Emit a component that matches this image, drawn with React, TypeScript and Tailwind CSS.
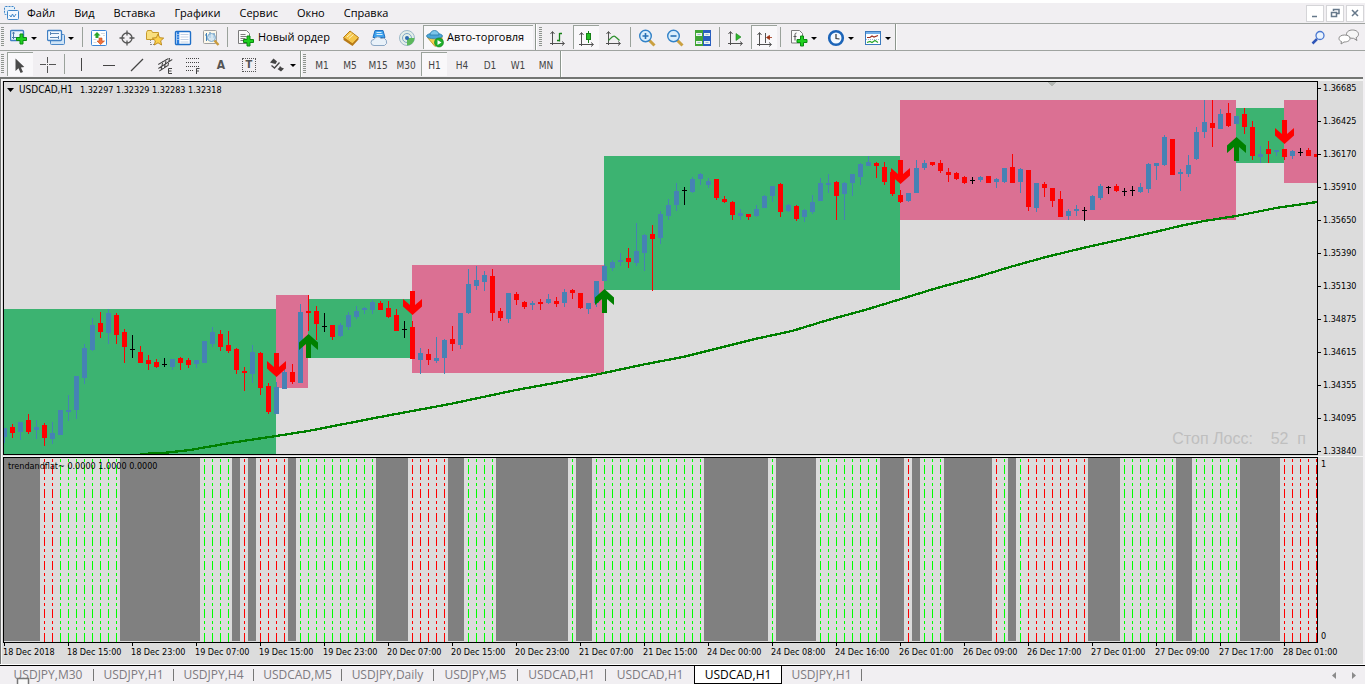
import React from "react";

type Kind = "b" | "r" | "k";
type Candle = [Kind, number, number, number, number];

const BLUE = "#4682b4";
const RED = "#ff0000";
const GREEN_ZONE = "#3cb371";
const PINK_ZONE = "#db7093";

// kind, high, low, body top, body bottom (chart rows)
const candles: Candle[] = [
  ["b", 428, 443, 428, 437], ["r", 424, 438, 427, 433], ["b", 422, 440, 422, 432], ["r", 414, 434, 420, 432],
  ["b", 420, 439, 427, 430], ["r", 423, 446, 425, 438], ["b", 422, 444, 433, 439], ["b", 410, 435, 410, 435],
  ["b", 395, 421, 410, 412], ["b", 376, 419, 376, 410], ["b", 344, 384, 348, 378], ["b", 318, 351, 325, 350],
  ["r", 312, 338, 323, 332], ["b", 309, 344, 313, 333], ["r", 313, 344, 315, 335], ["r", 329, 363, 332, 347],
  ["k", 335, 358, 349, 350], ["r", 346, 363, 352, 363], ["r", 355, 370, 360, 364], ["r", 359, 368, 362, 367],
  ["k", 358, 367, 364, 365], ["b", 359, 370, 359, 367], ["r", 357, 370, 358, 363], ["r", 358, 368, 360, 365],
  ["b", 360, 368, 360, 364], ["b", 341, 363, 341, 363], ["b", 327, 347, 332, 344], ["r", 330, 351, 334, 347],
  ["r", 331, 353, 345, 351], ["r", 348, 374, 349, 370], ["r", 367, 391, 371, 373], ["b", 345, 383, 352, 374],
  ["r", 352, 395, 353, 388], ["r", 383, 414, 386, 412], ["b", 382, 414, 387, 414], ["b", 368, 389, 372, 389],
  ["r", 364, 384, 372, 382], ["b", 304, 383, 312, 383], ["r", 295, 331, 311, 313], ["r", 306, 340, 311, 324],
  ["k", 313, 332, 326, 327], ["r", 325, 340, 325, 337], ["b", 323, 337, 325, 336], ["b", 312, 330, 315, 327],
  ["b", 306, 319, 311, 317], ["b", 307, 314, 308, 310], ["b", 300, 314, 302, 310], ["r", 301, 310, 303, 310],
  ["r", 301, 318, 308, 317], ["r", 309, 331, 315, 331], ["k", 321, 338, 329, 330], ["r", 321, 359, 327, 359],
  ["b", 348, 374, 353, 360], ["r", 349, 365, 354, 360], ["b", 337, 363, 358, 361], ["b", 339, 374, 340, 358],
  ["r", 326, 351, 339, 344], ["b", 313, 349, 313, 345], ["b", 269, 314, 284, 313], ["b", 266, 290, 280, 286],
  ["b", 271, 291, 275, 282], ["r", 269, 321, 276, 313], ["r", 308, 321, 311, 318], ["b", 293, 323, 293, 319],
  ["r", 292, 305, 294, 300], ["r", 301, 309, 302, 307], ["b", 301, 310, 303, 305], ["r", 299, 310, 302, 304],
  ["b", 294, 304, 299, 303], ["r", 297, 307, 301, 304], ["b", 289, 307, 292, 303], ["r", 289, 299, 290, 293],
  ["r", 293, 309, 293, 308], ["b", 303, 314, 303, 309], ["b", 281, 307, 281, 303], ["b", 264, 281, 266, 281],
  ["b", 260, 271, 262, 268], ["b", 253, 266, 260, 262], ["r", 248, 268, 258, 262], ["b", 223, 266, 251, 263],
  ["b", 234, 271, 235, 253], ["r", 225, 291, 234, 239], ["b", 211, 244, 214, 238], ["b", 199, 220, 205, 216],
  ["b", 183, 211, 191, 205], ["k", 187, 205, 190, 191], ["b", 177, 193, 179, 192], ["b", 173, 185, 174, 179],
  ["b", 178, 188, 181, 185], ["r", 179, 200, 179, 198], ["r", 196, 203, 199, 202], ["r", 201, 220, 202, 215],
  ["b", 209, 220, 213, 216], ["r", 214, 220, 214, 217], ["b", 205, 217, 209, 216], ["b", 195, 208, 196, 208],
  ["b", 186, 202, 186, 196], ["r", 183, 217, 184, 212], ["b", 204, 212, 205, 211], ["r", 205, 221, 206, 219],
  ["b", 209, 222, 210, 217], ["b", 195, 214, 202, 212], ["b", 178, 201, 183, 201], ["b", 174, 193, 183, 185],
  ["r", 181, 220, 182, 196], ["b", 182, 220, 183, 194], ["b", 174, 196, 174, 183], ["b", 163, 185, 164, 177],
  ["b", 156, 166, 162, 166], ["r", 162, 178, 163, 166], ["r", 162, 185, 167, 182], ["r", 172, 196, 172, 194],
  ["r", 190, 203, 195, 202], ["b", 193, 202, 193, 201], ["b", 160, 193, 168, 193], ["b", 160, 170, 163, 168],
  ["r", 162, 166, 162, 165], ["r", 160, 173, 163, 171], ["r", 168, 182, 172, 175], ["r", 172, 180, 173, 179],
  ["r", 176, 184, 177, 183], ["k", 177, 184, 180, 181], ["b", 176, 182, 177, 180], ["r", 176, 183, 176, 183],
  ["b", 178, 188, 179, 182], ["b", 168, 183, 168, 182], ["r", 154, 183, 167, 183], ["b", 168, 193, 169, 182],
  ["r", 170, 211, 170, 207], ["b", 183, 212, 183, 208], ["r", 182, 197, 184, 188], ["r", 188, 207, 188, 201],
  ["r", 191, 217, 199, 217], ["b", 209, 220, 211, 216], ["b", 205, 216, 209, 211], ["k", 207, 221, 210, 211],
  ["b", 195, 210, 196, 210], ["b", 184, 200, 186, 198], ["k", 186, 194, 187, 188], ["r", 184, 192, 186, 191],
  ["k", 188, 196, 191, 192], ["k", 186, 196, 190, 191], ["b", 183, 193, 187, 192], ["b", 163, 193, 164, 189],
  ["b", 163, 180, 163, 166], ["b", 135, 166, 137, 165], ["r", 139, 175, 139, 175], ["b", 169, 191, 172, 174],
  ["b", 155, 177, 165, 174], ["b", 127, 160, 132, 159], ["b", 100, 138, 122, 132], ["r", 100, 147, 123, 128],
  ["b", 109, 129, 114, 129], ["r", 103, 127, 113, 126], ["b", 116, 124, 116, 124], ["r", 108, 134, 114, 127],
  ["r", 121, 160, 127, 156], ["b", 146, 163, 154, 157], ["r", 141, 163, 149, 154], ["b", 150, 156, 150, 152],
  ["r", 149, 160, 149, 157], ["b", 150, 159, 151, 156], ["k", 148, 156, 152, 153], ["r", 148, 156, 150, 156],
  ["r", 154, 157, 154, 157],
];

const zones = [
  { x: 4, y: 309, w: 272, h: 146, c: GREEN_ZONE },
  { x: 276, y: 295, w: 32, h: 93, c: PINK_ZONE },
  { x: 308, y: 299, w: 104, h: 59, c: GREEN_ZONE },
  { x: 412, y: 265, w: 192, h: 108, c: PINK_ZONE },
  { x: 604, y: 156, w: 296, h: 134, c: GREEN_ZONE },
  { x: 900, y: 100, w: 336, h: 120, c: PINK_ZONE },
  { x: 1236, y: 108, w: 48, h: 55, c: GREEN_ZONE },
  { x: 1284, y: 100, w: 33, h: 83, c: PINK_ZONE },
];

const ma =
  "140,454 163,453 190,450 230,443 276,436 308,431 380,417 450,404 516,390 560,382 604,373 646,364 683,357 719,348 755,339 792,331 828,320 865,310 901,299 937,288 974,278 1010,267 1046,257 1083,248 1119,240 1155,232 1180,226 1204,221 1236,216 1276,208 1317,202";

const signals: [number, number, boolean][] = [
  [276, 377, false], [308, 334, true], [412, 315, false], [604, 289, true], [900, 184, false], [1236, 137, true], [1284, 144, false],
];

const flats = [
  [4, 40], [120, 200], [232, 240], [248, 256], [288, 296], [376, 408], [448, 464], [496, 568], [576, 592], [704, 768], [776, 816],
  [880, 904], [912, 920], [944, 992], [1008, 1016], [1088, 1120], [1176, 1192], [1240, 1280],
];

// first bar, last bar, is red
const trends: [number, number, boolean][] = [
  [44, 52, true], [60, 116, false], [204, 228, false], [244, 244, true], [260, 284, true], [300, 372, false], [412, 444, true],
  [468, 492, false], [572, 572, false], [596, 700, false], [772, 772, false], [820, 876, false], [908, 908, true], [924, 940, false],
  [996, 996, true], [1004, 1004, false], [1020, 1020, false], [1028, 1084, true], [1124, 1172, false], [1196, 1236, false], [1284, 1316, true],
];

const prices = ["1.36685", "1.36425", "1.36170", "1.35910", "1.35650", "1.35390", "1.35130", "1.34875", "1.34615", "1.34355", "1.34095", "1.33840"];

const times = [
  "18 Dec 2018", "18 Dec 15:00", "18 Dec 23:00", "19 Dec 07:00", "19 Dec 15:00", "19 Dec 23:00", "20 Dec 07:00", "20 Dec 15:00",
  "20 Dec 23:00", "21 Dec 07:00", "21 Dec 15:00", "24 Dec 00:00", "24 Dec 08:00", "24 Dec 16:00", "26 Dec 01:00", "26 Dec 09:00",
  "26 Dec 17:00", "27 Dec 01:00", "27 Dec 09:00", "27 Dec 17:00", "28 Dec 01:00",
];

const tabs = [
  { t: "USDJPY,M30", w: "w-[91px]" }, { t: "USDJPY,H1", w: "w-20" }, { t: "USDJPY,H4", w: "w-20" }, { t: "USDCAD,M5", w: "w-[88px]" },
  { t: "USDJPY,Daily", w: "w-[92px]" }, { t: "USDJPY,M5", w: "w-[84px]" }, { t: "USDCAD,H1", w: "w-[88px]" }, { t: "USDCAD,H1", w: "w-[88px]" },
  { t: "USDCAD,H1", w: "w-[88px]", active: true }, { t: "USDJPY,H1", w: "w-20" },
];

const SMALL = "font-['DejaVu_Sans_Condensed','DejaVu_Sans',sans-serif]";

function Ico({ children }: { children: React.ReactNode }) {
  return (
    <svg width="18" height="18" viewBox="0 0 18 18" className="mt-[2px] shrink-0" aria-hidden="true">
      {children}
    </svg>
  );
}

const plus = (x: number, y: number) => (
  <path
    transform={`translate(${x} ${y})`}
    d="M4 .5h3v3.500h3.500v3H7v3.500H4V7H.5V4H4z"
    fill="#1fd01f"
    stroke="#0b8a12"
    strokeWidth="1"
  />
);

const axes = (
  <path d="M3.500 3v13M1 14.500h14M1.500 5l2-2.500 2 2.500M13 12.500l2.500 2-2.500 2" fill="none" stroke="#505050" />
);

const icons = {
  newChart: (
    <Ico>
      <rect x=".5" y="1.500" width="13" height="10" rx="1" fill="#e8f2fc" stroke="#3f7fc4" strokeWidth="1.400" />
      <path d="M3.500 3v7M2 8.500h9M2.500 4.500l1-1.500 1 1.500" stroke="#4a78a8" fill="none" />
      {plus(6, 4.5)}
    </Ico>
  ),
  profiles: (
    <Ico>
      <rect x="3.500" y="5.500" width="14" height="10" rx="1" fill="#cfe3f6" stroke="#4a86c6" />
      <rect x=".5" y="1.500" width="14" height="10" rx="1" fill="#f2f8fe" stroke="#3f7fc4" strokeWidth="1.300" />
      <path d="M3 4.500h9M3 8.500h9M3.500 3v3M11.500 7v3" stroke="#5b87b5" />
    </Ico>
  ),
  market: (
    <Ico>
      <rect x="1.500" y="1.500" width="15" height="15" rx="1" fill="#fff" stroke="#3c86d8" />
      <path d="M11 4.500h4M13 6.500h2M3.500 10.500h3M3.500 13.500h3" stroke="#d5d9de" />
      <path d="M7 3l3.500 3.500H8.500v2.500h-3V6.500h-2z" fill="#2ba52b" />
      <path d="M10.500 15.500L7 12h2V9h3v3h2.500z" fill="#f0703a" stroke="#c84a18" strokeWidth=".6" />
    </Ico>
  ),
  crosshair: (
    <Ico>
      <circle cx="9" cy="9" r="5" fill="none" stroke="#555" strokeWidth="1.300" />
      <path d="M9 1.500v5M9 11.500v5M1.500 9h5M11.500 9h5" stroke="#555" strokeWidth="1.300" />
    </Ico>
  ),
  navigator: (
    <Ico>
      <path d="M.5 3.500l1-2h4l1 2h6v7H.5z" fill="#f9df7e" stroke="#c79a2c" />
      <path d="M4.500 11v5M5 15.500h3" stroke="#8a8a8a" strokeDasharray="1 1" />
      <path d="M12 5l1.700 3.700 4 .4-3 2.700.9 4.200-3.600-2.200L8.400 16l.9-4.200-3-2.700 4-.4z" fill="#fbd04b" stroke="#b98518" strokeWidth=".9" />
    </Ico>
  ),
  dataWin: (
    <Ico>
      <rect x="1.500" y="2.500" width="15" height="13" rx="1" fill="#fff" stroke="#1f6fc8" strokeWidth="1.400" />
      <path d="M4 3v12" stroke="#2a7de0" strokeWidth="2.500" />
      <path d="M6.500 5.500h8M6.500 8h8M6.500 10.500h8M6.500 13h8" stroke="#c3d2e6" />
      <path d="M3.500 5.500h1M3.500 8h1M3.500 10.500h1" stroke="#fff" />
    </Ico>
  ),
  tester: (
    <Ico>
      <rect x="1.500" y="1.500" width="13" height="13" rx="1" fill="#fdf8ea" stroke="#a0a0a0" />
      <path d="M4.500 4v8M3 6h1.500M4.500 10H6M8 3v6M12 4v5" stroke="#3f7fb8" />
      <circle cx="9.500" cy="8.500" r="4" fill="#c5e0f4" fillOpacity=".7" stroke="#7aa8cc" />
      <path d="M12.500 11.500l4 4.500" stroke="#c99a3c" strokeWidth="2.400" />
    </Ico>
  ),
  order: (
    <Ico>
      <path d="M1.500 1.500h8l3 3v10h-11z" fill="#fbfbfb" stroke="#7b7b7b" />
      <path d="M3.500 5.500h5M3.500 7.500h6M3.500 9.500h5M3.500 11.500h3" stroke="#7d7d7d" />
      {plus(6, 6.5)}
    </Ico>
  ),
  editor: (
    <Ico>
      <path d="M1.500 8.500L8 2l8.500 6.500-6 6.500z" fill="#f5c64a" stroke="#b67c14" />
      <path d="M1.500 8.500v2.500l9 6 6-6.500V8.500l-6 6z" fill="#b87a18" />
      <path d="M5 8l4.500-4M7 9.500L11.500 5.500" stroke="#fff1bd" />
    </Ico>
  ),
  vps: (
    <Ico>
      <path d="M5 1.500h8l2 7H3z" fill="#3fa2ec" stroke="#1f6fc0" />
      <path d="M6.500 3.500h5M6.500 5.500h6" stroke="#d7edff" />
      <path d="M4 16.500a3 3 0 010-6 4 4 0 017-1 3.500 3.500 0 013.500 7z" fill="#e9f1f9" stroke="#8aa6c4" />
    </Ico>
  ),
  signals: (
    <Ico>
      <circle cx="9" cy="9" r="7.500" fill="#e3efe8" stroke="#9db9c9" />
      <circle cx="9" cy="9" r="4.500" fill="none" stroke="#7fa6c6" />
      <path d="M9 9h7.500a7.500 7.500 0 01-7.500 7.500z" fill="#5cb85c" />
      <circle cx="9" cy="9" r="2" fill="#2c6bb0" />
    </Ico>
  ),
  auto: (
    <Ico>
      <path d="M1.500 7.500l7.500 9 7-6V6.500z" fill="#f4cf4e" stroke="#b98d1d" strokeWidth=".8" />
      <ellipse cx="8.500" cy="6" rx="8" ry="2.800" fill="#4ba6d8" stroke="#2a7cab" strokeWidth=".8" />
      <path d="M4 5a4.500 4.500 0 019 0z" fill="#7cc6ec" stroke="#2a7cab" strokeWidth=".8" />
      <circle cx="13" cy="12.500" r="4.500" fill="#1fae2b" stroke="#0c7f18" strokeWidth=".6" />
      <path d="M11.500 10v5l4-2.500z" fill="#fff" />
    </Ico>
  ),
  bars: (
    <Ico>
      {axes}
      <path d="M10.500 4v8.500M8 11.500h2.500M10.500 4.500H13" stroke="#178017" strokeWidth="1.300" />
    </Ico>
  ),
  candle: (
    <Ico>
      {axes}
      <path d="M10.500 1v12" stroke="#178017" />
      <rect x="8.500" y="3.500" width="4" height="6" fill="#22c022" stroke="#178017" />
    </Ico>
  ),
  line: (
    <Ico>
      {axes}
      <path d="M3.500 11.500C6 9 8 6 10 7.500s3 2.500 4.500 4" fill="none" stroke="#2d8f2d" strokeWidth="1.300" />
    </Ico>
  ),
  zoomIn: (
    <Ico>
      <path d="M11 11l5.500 5.500" stroke="#caa040" strokeWidth="3" />
      <circle cx="7.500" cy="7" r="5.800" fill="#d9eefc" stroke="#3282c8" strokeWidth="1.400" />
      <path d="M4.500 7h6M7.500 4v6" stroke="#2670b4" strokeWidth="1.600" />
    </Ico>
  ),
  zoomOut: (
    <Ico>
      <path d="M11 11l5.500 5.500" stroke="#caa040" strokeWidth="3" />
      <circle cx="7.500" cy="7" r="5.800" fill="#d9eefc" stroke="#3282c8" strokeWidth="1.400" />
      <path d="M4.500 7h6" stroke="#2670b4" strokeWidth="1.600" />
    </Ico>
  ),
  tile: (
    <Ico>
      <path d="M1 1h8v8H1zM9 9h8v8H9z" fill="#3fa535" />
      <path d="M9 1h8v8H9z" fill="#2a5fc0" />
      <path d="M9 9h8v8H9z" fill="#2a5fc0" />
      <path d="M1 9h8v8H1z" fill="#3fa535" />
      <path d="M2 4h6v3H2zM10 4h6v3h-6zM2 12h6v3H2zM10 12h6v3h-6z" fill="#eef5ee" />
      <path d="M3.500 5.500h3M11.500 5.500h3M3.500 13.500h3M11.500 13.500h3" stroke="#9bb9d8" />
    </Ico>
  ),
  scroll: (
    <Ico>
      {axes}
      <path d="M9 4.500l5 3.500-5 3.500z" fill="#2eb82e" stroke="#178017" strokeWidth=".6" />
    </Ico>
  ),
  shift: (
    <Ico>
      {axes}
      <path d="M9.500 3v10" stroke="#555" />
      <path d="M16 7.500h-3M13.500 5.500l-3 2 3 2z" stroke="#9c3010" fill="#9c3010" strokeWidth=".8" />
    </Ico>
  ),
  indicators: (
    <Ico>
      <path d="M1.500 1.500h8l3 3v9.500h-11z" fill="#fbfbfb" stroke="#7b7b7b" />
      <path d="M5 11.500V5.500q0-1.500 1.500-1.500M3.500 7.500h3" stroke="#555" fill="none" />
      {plus(6.5, 6.5)}
    </Ico>
  ),
  clock: (
    <Ico>
      <circle cx="9" cy="9" r="6.800" fill="#f3f9ff" stroke="#1c64b8" strokeWidth="2.600" />
      <path d="M9 5v4.500l3.500.5" fill="none" stroke="#333" strokeWidth="1.200" />
    </Ico>
  ),
  template: (
    <Ico>
      <rect x="1.500" y="2.500" width="15" height="13" fill="#fff" stroke="#3b79bd" />
      <path d="M2 4h14" stroke="#74b0ea" strokeWidth="2" />
      <path d="M3 8.500h3l2-1.500 2 1 4-1.500" fill="none" stroke="#9c2b1c" strokeWidth="1.200" />
      <path d="M2 10.500h14" stroke="#9fb9d4" strokeDasharray="1 1" />
      <path d="M3 13.500l3-1 2 1 3-2 3 2" fill="none" stroke="#2ba52b" strokeWidth="1.200" />
    </Ico>
  ),
  cursor: (
    <Ico>
      <path d="M3.500 1.500V14l3-2.700 2.100 4.700 2.400-1.100-2.100-4.500 3.400-.3z" fill="#4a4a4a" />
    </Ico>
  ),
  cross: (
    <Ico>
      <path d="M8.500 1v6M8.500 10v7M1 8.500h6M10 8.500h7" stroke="#555" />
      <path d="M8 8.500h1" stroke="#555" />
    </Ico>
  ),
  vline: <Ico><path d="M9.500 2v13" stroke="#444" /></Ico>,
  hline: <Ico><path d="M3 9.500h12" stroke="#444" /></Ico>,
  diag: <Ico><path d="M3 15L15 3" stroke="#444" strokeWidth="1.200" /></Ico>,
  channel: (
    <Ico>
      <path d="M2 12.500L14 3.500M1 8.500l9-6M3.500 15l8-6M5 5v9M8 3v9M11 2v8" stroke="#444" transform="skewX(-12) translate(3 0)" />
      <path d="M16 12.500h-3.500v5H16M12.500 15h3" fill="none" stroke="#444" />
    </Ico>
  ),
  fibo: (
    <Ico>
      <path d="M2 2.500h13M2 6.500h13M2 10.500h13M2 14.500h8" stroke="#444" strokeDasharray="1 1" />
      <path d="M15.500 12.500h-3V18M12.500 15H15" fill="none" stroke="#444" />
    </Ico>
  ),
  arrows: (
    <Ico>
      <path d="M4.500 2.500L8 5.500 6.500 8 4.500 7.500 1 6.500z" fill="#444" />
      <path d="M12 15.500l-3.500-2.500 1.500-1 1-2 1.500 1.500 2.500 1z" fill="#444" />
      <path d="M2.500 9.500l3 2.500 5-5.500" fill="none" stroke="#444" strokeWidth="1.300" />
    </Ico>
  ),
};

function Grip() {
  return (
    <svg width="4" height="20" className="ml-px mr-px shrink-0" aria-hidden="true">
      <path d="M1.500 0v20" stroke="#8e948e" strokeWidth="3" strokeDasharray="1 1" />
    </svg>
  );
}

function Sep() {
  return (
    <div className="flex w-[5px] shrink-0 justify-center self-stretch py-[3px]">
      <div className="w-px bg-[#9aa29b]" />
    </div>
  );
}

function BarEnd() {
  return <div className="w-[2px] shrink-0 self-stretch border-l border-[#8c968d] bg-white" />;
}

function Btn({ label, pressed, children }: { label: string; pressed?: boolean; children: React.ReactNode }) {
  return (
    <button aria-label={label} className="flex h-[25px] w-7 shrink-0 items-center justify-center">
      <span
        className={
          pressed
            ? "flex h-[24px] w-[26px] items-center justify-center border-l border-t border-[#9aa29b] bg-[#f9f8fa]"
            : "flex items-center justify-center"
        }
      >
        {children}
      </span>
    </button>
  );
}

function DropBtn({ label, children }: { label: string; children: React.ReactNode }) {
  return (
    <button aria-label={label} className="flex h-[25px] w-[35px] shrink-0 items-center gap-[3px] pl-1">
      {children}
      <svg width="6" height="3" className="mt-[2px] shrink-0" aria-hidden="true">
        <path d="M0 0h6L3 3z" fill="#000" />
      </svg>
    </button>
  );
}

function TextBtn({ children, pressed }: { children: string; pressed?: boolean }) {
  return (
    <Btn label={children} pressed={pressed}>
      <span className={`${SMALL} mt-[2px] text-[10px] text-[#444]`}>{children}</span>
    </Btn>
  );
}

function WinBtn({ label, d }: { label: string; d: string }) {
  return (
    <button aria-label={label} className="flex h-[17px] w-[18px] items-center justify-center border border-[#d5d5d8] bg-white">
      <svg width="10" height="10" viewBox="0 0 10 10" aria-hidden="true">
        <path d={d} fill="none" stroke="#66788a" strokeWidth="1.500" />
      </svg>
    </button>
  );
}

function PriceChart() {
  return (
    <svg className="block h-full w-full" role="img" aria-label="USDCAD, H1" shapeRendering="crispEdges">
      <g transform="translate(-4 -82)">
        {zones.map((z) => (
          <rect key={z.x} x={z.x} y={z.y} width={z.w} height={z.h} fill={z.c} />
        ))}
        {candles.map(([k, hi, lo, top, bottom], i) => {
          const x = 4 + i * 8;
          const color = k === "b" ? BLUE : k === "r" ? RED : "#000";
          return (
            <g key={i} fill={color}>
              <rect x={x} y={hi} width="1" height={lo - hi} />
              <rect x={x - 2} y={top} width="5" height={bottom - top} />
            </g>
          );
        })}
        <polyline points={ma} fill="none" stroke="#008000" strokeWidth="2.300" strokeLinejoin="round" />
        <g shapeRendering="auto">
          {signals.map(([x, y, up]) => (
            <path
              key={x}
              transform={`translate(${x} ${y}) scale(1 ${up ? 1 : -1})`}
              d="M.5 0l9.500 8.500v7.500L3 10v14h-5V10l-7 6V8.500z"
              fill={up ? "#008000" : RED}
            />
          ))}
        </g>
        <path d="M1048 82h8l-4 5z" fill="#b4b8b4" />
      </g>
    </svg>
  );
}

function TrendPane() {
  const lines: { x: number; red: boolean }[] = [];
  trends.forEach(([a, b, red]) => {
    for (let x = a; x <= b; x += 8) lines.push({ x, red });
  });
  return (
    <svg className="block h-full w-full" role="img" aria-label="trendandflat" shapeRendering="crispEdges">
      <g transform="translate(-4 -458)">
        {flats.map(([a, b]) => (
          <rect key={a} x={a} y="458" width={b - a} height="183" fill="#808080" />
        ))}
        {lines.map(({ x, red }) => (
          <path key={x} d={`M${x + 0.5} 458V642`} stroke={red ? "#ff0000" : "#00ff00"} strokeDasharray="9 3 3 3 3 3" strokeDashoffset="17" />
        ))}
      </g>
    </svg>
  );
}

export default function App() {
  return (
    <div className="flex min-h-screen flex-col overflow-hidden bg-[#f1eff2] font-['Open_Sans','Noto_Sans',sans-serif] text-[11px] text-black">
      <header className="flex h-[23px] items-center border-t-[3px] border-white pl-1">
        <svg width="15" height="15" viewBox="0 0 15 15" className="mr-2 shrink-0" aria-hidden="true">
          <rect x=".5" y=".5" width="10" height="8" rx="1" fill="#e6f1fb" stroke="#3f86c8" strokeDasharray="2 1" />
          <rect x="3.500" y="4.500" width="11" height="9" rx="1" fill="#f2f8fe" stroke="#3f86c8" />
          <path d="M5.500 9l1.500 2 1.500-3 1.500 3 2-3" fill="none" stroke="#3f86c8" />
        </svg>
        <nav className="flex gap-[19px]">
          {["Файл", "Вид", "Вставка", "Графики", "Сервис", "Окно", "Справка"].map((m) => (
            <button key={m} className="leading-5">{m}</button>
          ))}
        </nav>
        <div className="ml-auto flex gap-[2px] pr-px">
          <WinBtn label="Свернуть" d="M2 8.500h5" />
          <WinBtn label="Восстановить" d="M3.500 3V1.500h5.500v4H7M1.500 4.500h5v4h-5z" />
          <WinBtn label="Закрыть" d="M2 2l6 6M8 2l-6 6" />
        </div>
      </header>

      <div className="flex h-[28px] items-center border-b border-t border-[#9fa3a0]">
        <Grip />
        <div className="flex gap-[2px] pr-[2px]">
          <DropBtn label="Новый график">{icons.newChart}</DropBtn>
          <DropBtn label="Профили">{icons.profiles}</DropBtn>
        </div>
        <Sep />
        <Btn label="Обзор рынка">{icons.market}</Btn>
        <Btn label="Перекрестие">{icons.crosshair}</Btn>
        <Btn label="Навигатор">{icons.navigator}</Btn>
        <Btn label="Терминал">{icons.dataWin}</Btn>
        <Btn label="Тестер">{icons.tester}</Btn>
        <Sep />
        <button className="flex w-[107px] shrink-0 items-center gap-[3px] whitespace-nowrap pl-[7px]">
          {icons.order}Новый ордер
        </button>
        <Btn label="Редактор">{icons.editor}</Btn>
        <Btn label="VPS">{icons.vps}</Btn>
        <Btn label="Сигналы">{icons.signals}</Btn>
        <button className="ml-[2px] mr-[2px] flex h-[24px] w-[110px] shrink-0 items-center gap-[3px] whitespace-nowrap border-l border-t border-[#9aa29b] bg-[#f9f8fa] pl-[2px]">
          {icons.auto}Авто-торговля
        </button>
        <BarEnd />
        <div className="flex items-center pl-px">
          <Grip />
        </div>
        <Btn label="Бары">{icons.bars}</Btn>
        <Btn label="Свечи" pressed>{icons.candle}</Btn>
        <Btn label="Линия">{icons.line}</Btn>
        <Sep />
        <Btn label="Увеличить">{icons.zoomIn}</Btn>
        <Btn label="Уменьшить">{icons.zoomOut}</Btn>
        <Btn label="Окна мозаикой">{icons.tile}</Btn>
        <Sep />
        <Btn label="Автопрокрутка">{icons.scroll}</Btn>
        <Btn label="Сдвиг графика" pressed>{icons.shift}</Btn>
        <Sep />
        <div className="flex gap-[2px] pl-[3px]">
          <DropBtn label="Индикаторы">{icons.indicators}</DropBtn>
          <DropBtn label="Периоды">{icons.clock}</DropBtn>
          <DropBtn label="Шаблоны">{icons.template}</DropBtn>
        </div>
        <BarEnd />
        <div className="ml-auto flex items-center gap-3 pr-[5px]">
          <button aria-label="Поиск">
            <svg width="15" height="15" viewBox="0 0 15 15" aria-hidden="true">
              <path d="M6 9l-4.500 4.500" stroke="#2f55b8" strokeWidth="2.500" />
              <circle cx="9" cy="5.500" r="4" fill="#eaf3fd" stroke="#4a78d0" strokeWidth="1.300" />
            </svg>
          </button>
          <button aria-label="Чат">
            <svg width="22" height="16" viewBox="0 0 22 16" aria-hidden="true">
              <path d="M14.500 1c3.500 0 6 1.800 6 4.200 0 1.700-1 2.800-2.500 3.500l1 2.800-3.500-2.200c-4 .2-7-1.400-7-4.100C8.500 2.800 11 1 14.500 1z" fill="#f6f6f6" stroke="#8a8a8a" />
              <path d="M6.500 6C3 6 1 7.500 1 9.500c0 1.500 1 2.500 2.500 3L3 15l3-2c3.500 0 6-1.300 6-3.500S10 6 6.500 6z" fill="#fff" stroke="#8a8a8a" />
            </svg>
          </button>
        </div>
      </div>

      <div className="flex h-[26px] items-center">
        <Grip />
        <Btn label="Курсор" pressed>{icons.cursor}</Btn>
        <Btn label="Перекрестье">{icons.cross}</Btn>
        <Sep />
        <Btn label="Вертикальная линия">{icons.vline}</Btn>
        <Btn label="Горизонтальная линия">{icons.hline}</Btn>
        <Btn label="Трендовая линия">{icons.diag}</Btn>
        <Btn label="Равноудаленный канал">{icons.channel}</Btn>
        <Btn label="Линии Фибоначчи">{icons.fibo}</Btn>
        <Btn label="Текст"><span className={`${SMALL} mt-[2px] text-[12px] font-bold text-[#555]`}>A</span></Btn>
        <Btn label="Текстовая метка">
          <span className={`${SMALL} mt-[2px] flex h-[14px] w-[14px] items-center justify-center border border-dotted border-[#555] text-[11px] font-bold leading-3 text-[#555]`}>T</span>
        </Btn>
        <div className="pl-[2px]">
          <DropBtn label="Стрелки">{icons.arrows}</DropBtn>
        </div>
        <BarEnd />
        <Grip />
        {["M1", "M5", "M15", "M30", "H1", "H4", "D1", "W1", "MN"].map((t) => (
          <TextBtn key={t} pressed={t === "H1"}>{t}</TextBtn>
        ))}
        <BarEnd />
      </div>

      <main className="mr-[2px] border-l border-t-2 border-[#737573] bg-[#dcdcdc]">
        <div className={`${SMALL} border-l border-t-2 border-[#f4f4f4] pl-px text-[9px] leading-[14px]`}>
          <div className="flex">
            <div className="relative h-[374px] min-w-0 flex-1 border border-black">
              <PriceChart />
              <div className="absolute left-[3px] top-px flex items-center whitespace-pre">
                <svg width="7" height="4" className="mr-[5px]" aria-hidden="true"><path d="M0 0h7L3.500 4z" /></svg>
                <span className="mr-[7px] text-[10px]">USDCAD,H1</span>
                <span>1.32297 1.32329 1.32283 1.32318</span>
              </div>
              <div className="absolute bottom-[5px] right-[11px] whitespace-pre font-['Liberation_Sans',sans-serif] text-[16px] leading-5 text-[#bfbfbf]">
                {"Стоп Лосс:    52  п"}
              </div>
            </div>
            <div className="h-[374px] w-[45px] shrink-0">
              {prices.map((p) => (
                <div key={p} className="flex h-[33px] items-start">
                  <span className="mr-[2px] mt-[7px] h-px w-[3px] bg-black" />
                  {p}
                </div>
              ))}
            </div>
          </div>
          <div className="mt-px flex border-t border-[#f4f4f4]">
            <div className="relative h-[186px] min-w-0 flex-1 border border-black">
              <TrendPane />
              <div className="absolute left-1 top-px">trendandflat~ 0.0000 1.0000 0.0000</div>
            </div>
            <div className="flex w-[45px] shrink-0 flex-col justify-between pl-[3px]">
              <span>1</span>
              <span>0</span>
            </div>
          </div>
          <div className="flex h-[21px] leading-3">
            {times.map((t) => (
              <div key={t} className="w-16 shrink-0 whitespace-nowrap">
                <div className="ml-px h-[3px] w-px bg-black" />
                <div>{t}</div>
              </div>
            ))}
          </div>
        </div>
      </main>

      <footer className="flex h-[20px] items-start border-t border-white">
        <div className="relative flex h-[19px] w-full border-t border-black pl-[3px]">
          {tabs.map(({ t, w, active }, i) => (
            <button
              key={i}
              className={`${w} flex h-[18px] shrink-0 items-center whitespace-nowrap text-[12px] leading-4 ${
                active ? "border-x border-b border-black bg-white text-black" : "text-[#7d7a80]"
              }`}
            >
              <span className="flex-1 text-center">{t}</span>
              {!active && i !== 7 && <span className="h-3 w-px bg-[#777]" />}
            </button>
          ))}
          <svg width="36" height="10" className="absolute bottom-0 left-2" aria-hidden="true">
            <rect x="9.500" y="4.500" width="11" height="9" fill="#fafafa" stroke="#777" strokeWidth="1.500" />
          </svg>
          <div className="ml-auto flex items-center gap-[14px] pr-[9px]">
            <button aria-label="Назад"><svg width="5" height="7" className="block"><path d="M4 0v7L0 3.500z" fill="#8b8b8b" /></svg></button>
            <button aria-label="Вперед"><svg width="5" height="7" className="block"><path d="M1 0v7l4-3.500z" fill="#8b8b8b" /></svg></button>
          </div>
        </div>
      </footer>
    </div>
  );
}
